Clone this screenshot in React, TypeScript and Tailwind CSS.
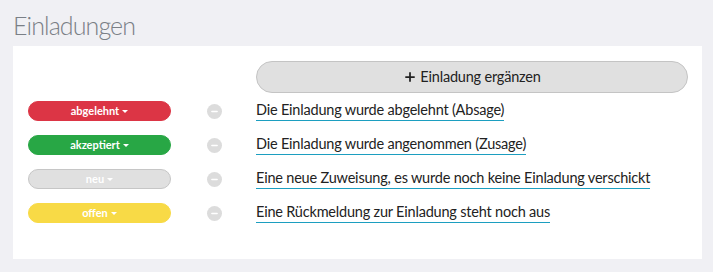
import { Minus, Plus } from "lucide-react";

const rows = [
    { label: "abgelehnt", badge: "bg-[#dc3545] border-[#dc3545]", text: "Die Einladung wurde abgelehnt (Absage)" },
    { label: "akzeptiert", badge: "bg-[#28a745] border-[#28a745]", text: "Die Einladung wurde angenommen (Zusage)" },
    { label: "neu", badge: "bg-[#e0e0e0] border-[#c6c6c6]", text: "Eine neue Zuweisung, es wurde noch keine Einladung verschickt" },
    { label: "offen", badge: "bg-[#f8da46] border-[#f8da46]", text: "Eine Rückmeldung zur Einladung steht noch aus" },
];

export default function App() {
    return (
        <div className="min-h-[272px] w-[713px] bg-[#f0f0f4] px-[13px] pt-[8px] font-['Lato',sans-serif]">
            <h1 className="text-[25px] font-light leading-[34px] tracking-[-0.9px] text-[#7a7f86]">Einladungen</h1>

            <div className="mt-[4px] flex h-[213px] w-[689px] flex-col bg-white pl-[15px] pr-[14px] pt-[15px]">
                <div className="flex">
                    <div className="w-[228px]"></div>
                    <button className="flex h-[32px] flex-1 items-center justify-center gap-[3px] rounded-full border border-[#c4c4c4] bg-[#e0e0e0] text-[14.5px] text-[#222]">
                        <Plus size={14} strokeWidth={3} />
                        <span className="tracking-[-0.2px]">Einladung ergänzen</span>
                    </button>
                </div>

                <div className="mt-[8px] flex flex-col gap-[14px]">
                    {rows.map(row => (
                        <div key={row.label} className="flex h-[20px] items-center">
                            <span
                                className={`flex h-[20px] w-[143px] items-center justify-center gap-[3px] rounded-full border text-[11px] font-bold text-white ${row.badge}`}
                            >
                                {row.label}
                                <span className="h-0 w-0 border-x-[3px] border-t-[3px] border-x-transparent border-t-white"></span>
                            </span>
                            <span className="ml-[36px] flex h-[15px] w-[15px] items-center justify-center rounded-full bg-[#dcdcdc]">
                                <Minus size={9} strokeWidth={4} className="text-white" />
                            </span>
                            <span className="ml-[34px] border-b border-[#1c9ec0] pb-[1px] text-[14.5px] leading-[18px] tracking-[-0.2px] text-[#222]">
                                {row.text}
                            </span>
                        </div>
                    ))}
                </div>
            </div>
        </div>
    );
}
